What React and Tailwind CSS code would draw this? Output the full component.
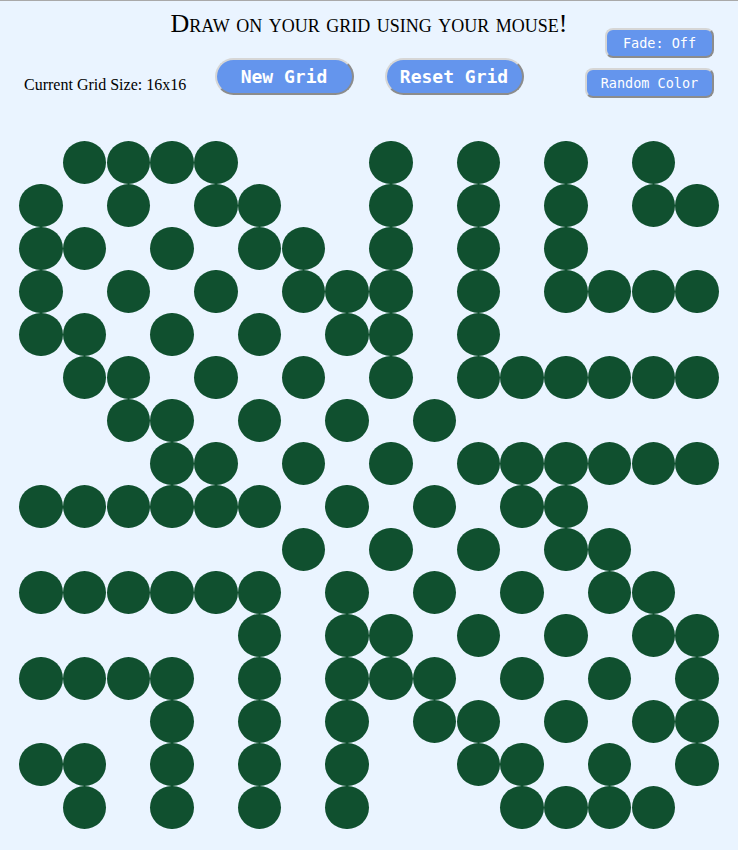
import React from "react";

const rows = [
  [1, 2, 3, 4, 8, 10, 12, 14],
  [0, 2, 4, 5, 8, 10, 12, 14, 15],
  [0, 1, 3, 5, 6, 8, 10, 12],
  [0, 2, 4, 6, 7, 8, 10, 12, 13, 14, 15],
  [0, 1, 3, 5, 7, 8, 10],
  [1, 2, 4, 6, 8, 10, 11, 12, 13, 14, 15],
  [2, 3, 5, 7, 9],
  [3, 4, 6, 8, 10, 11, 12, 13, 14, 15],
  [0, 1, 2, 3, 4, 5, 7, 9, 11, 12],
  [6, 8, 10, 12, 13],
  [0, 1, 2, 3, 4, 5, 7, 9, 11, 13, 14],
  [5, 7, 8, 10, 12, 14, 15],
  [0, 1, 2, 3, 5, 7, 8, 9, 11, 13, 15],
  [3, 5, 7, 9, 10, 12, 14, 15],
  [0, 1, 3, 5, 7, 10, 11, 13, 15],
  [1, 3, 5, 7, 11, 12, 13, 14],
];

const bigBtn =
  "w-[139px] h-[37px] rounded-full bg-[#6495ed] text-white text-[18px] font-bold font-['DejaVu_Sans_Mono',monospace] border-2 border-t-[#d6d6d6] border-l-[#d6d6d6] border-b-[#8c8c8c] border-r-[#8c8c8c]";
const smallBtn =
  "rounded-[8px] bg-[#6495ed] text-white text-[13.5px] font-['DejaVu_Sans_Mono',monospace] border-2 border-t-[#d6d6d6] border-l-[#d6d6d6] border-b-[#8c8c8c] border-r-[#8c8c8c]";

function Header() {
  return (
    <div className="flex px-6">
      <div className="flex-1 min-w-0 pt-[72px]">
        <p className="whitespace-nowrap text-[16px] leading-6 font-['Liberation_Serif',serif] text-black">
          Current Grid Size: 16x16
        </p>
      </div>
      <div className="flex flex-col items-center">
        <h1 className="mt-2 whitespace-nowrap text-[26px] leading-[29px] font-['Liberation_Serif',serif] [font-variant:small-caps] text-black">
          Draw on your grid using your mouse!
        </h1>
        <div className="mt-5 flex gap-[31px]">
          <button className={bigBtn}>New Grid</button>
          <button className={bigBtn}>Reset Grid</button>
        </div>
      </div>
      <div className="flex-1 min-w-0 pt-[27px] flex flex-col items-end gap-[10px]">
        <button className={smallBtn + " w-[109px] h-[30px]"}>Fade: Off</button>
        <button className={smallBtn + " w-[129px] h-[30px]"}>Random Color</button>
      </div>
    </div>
  );
}

function Grid() {
  return (
    <div className="mx-auto mt-[43px] w-[700px] grid grid-cols-16 auto-rows-[43px]">
      {rows.map((cols, r) =>
        Array.from({ length: 16 }, (_, c) => (
          <div key={r + "-" + c} className="p-[0.2px]">
            {cols.includes(c) ? (
              <div className="w-full h-full rounded-full bg-[#10502f]" />
            ) : null}
          </div>
        ))
      )}
    </div>
  );
}

export default function App() {
  return (
    <div className="min-h-screen bg-[#eaf4ff] border-t border-[#a9a9a9]">
      <Header />
      <Grid />
    </div>
  );
}
